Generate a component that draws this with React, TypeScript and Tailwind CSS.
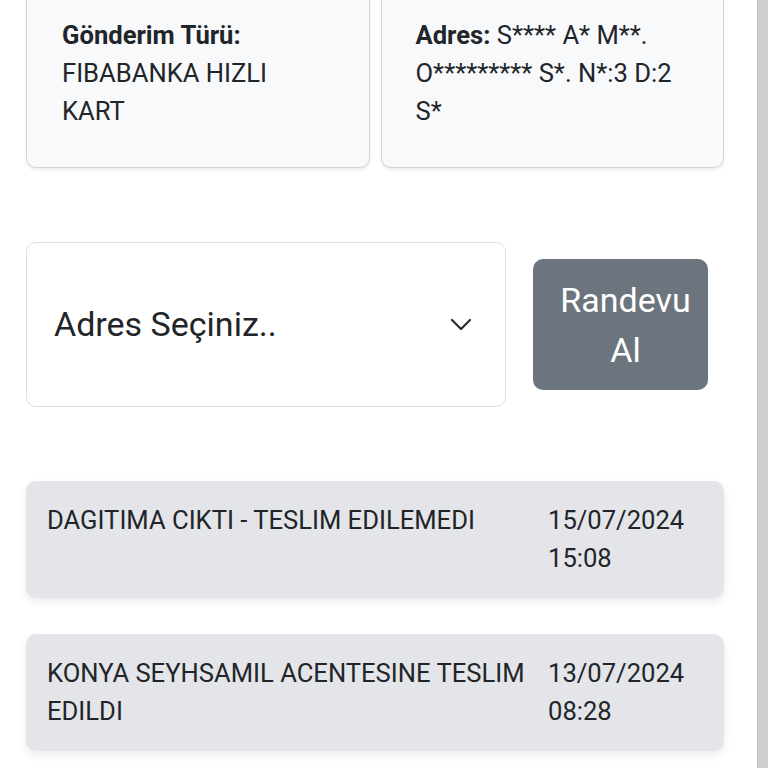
import React from "react";

const font = { fontFamily: "Roboto, 'Noto Sans', sans-serif" };

function Chevron() {
  return (
    <svg width="22" height="14" viewBox="0 0 22 14" fill="none">
      <path d="M2 2 L11 11 L20 2" stroke="#2b2b2b" strokeWidth="2.2" strokeLinecap="round" strokeLinejoin="round" />
    </svg>
  );
}

function Movement({ text, date, time }: { text: string; date: string; time: string }) {
  return (
    <div className="rounded-[10px] bg-[#e4e5e8] shadow-[0_4px_8px_rgba(0,0,0,0.08)] pl-[21px] pr-[8px] pt-[20px] pb-[21px] grid grid-cols-[1fr_168px] gap-[10px] text-[25.6px] leading-[38px] text-[#212529]">
      <div>{text}</div>
      <div>
        <div>{date}</div>
        <div>{time}</div>
      </div>
    </div>
  );
}

export default function App() {
  return (
    <div className="flex h-[768px] w-[768px] overflow-hidden bg-white" style={font}>
      <div className="w-[757px] h-full overflow-hidden">
        <div className="pl-[26px] pr-[33px] mt-[-20px]">
          <div className="grid grid-cols-2 gap-[11px]">
            <div className="rounded-[10px] border border-[#d3d5d8] bg-[#f8f9fa] shadow-[0_2px_3px_rgba(0,0,0,0.08)] px-[35px] pt-[35px] pb-[37px] text-[25.6px] leading-[38px] text-[#212529]">
              <span className="font-bold">Gönderim Türü:</span>
              <br />
              FIBABANKA HIZLI KART
            </div>
            <div className="rounded-[10px] border border-[#d3d5d8] bg-[#f8f9fa] shadow-[0_2px_3px_rgba(0,0,0,0.08)] px-[34px] pt-[35px] pb-[37px] text-[25.6px] leading-[38px] text-[#212529]">
              <span className="font-bold">Adres:</span> S**** A* M**. O********* S*. N*:3 D:2 S*
            </div>
          </div>

          <div className="mt-[74px] flex items-center">
            <div className="w-[480px] h-[165px] rounded-[10px] border border-[#dcdee1] bg-white flex items-center justify-between pl-[27px] pr-[33px]">
              <span className="text-[34px] text-[#212529]">Adres Seçiniz..</span>
              <Chevron />
            </div>
            <div className="ml-[27px] w-[175px] h-[131px] rounded-[10px] bg-[#6c757d] text-white text-[34px] leading-[50px] flex items-center justify-center text-center pl-[20px] pr-[10px]">
              Randevu Al
            </div>
          </div>

          <div className="mt-[74px] flex flex-col gap-[36px]">
            <Movement text="DAGITIMA CIKTI - TESLIM EDILEMEDI" date="15/07/2024" time="15:08" />
            <Movement text="KONYA SEYHSAMIL ACENTESINE TESLIM EDILDI" date="13/07/2024" time="08:28" />
          </div>
        </div>
      </div>
      <div className="w-[11px] h-full bg-[#cfcfcf] border-l border-[#bdbdbd]" />
    </div>
  );
}
